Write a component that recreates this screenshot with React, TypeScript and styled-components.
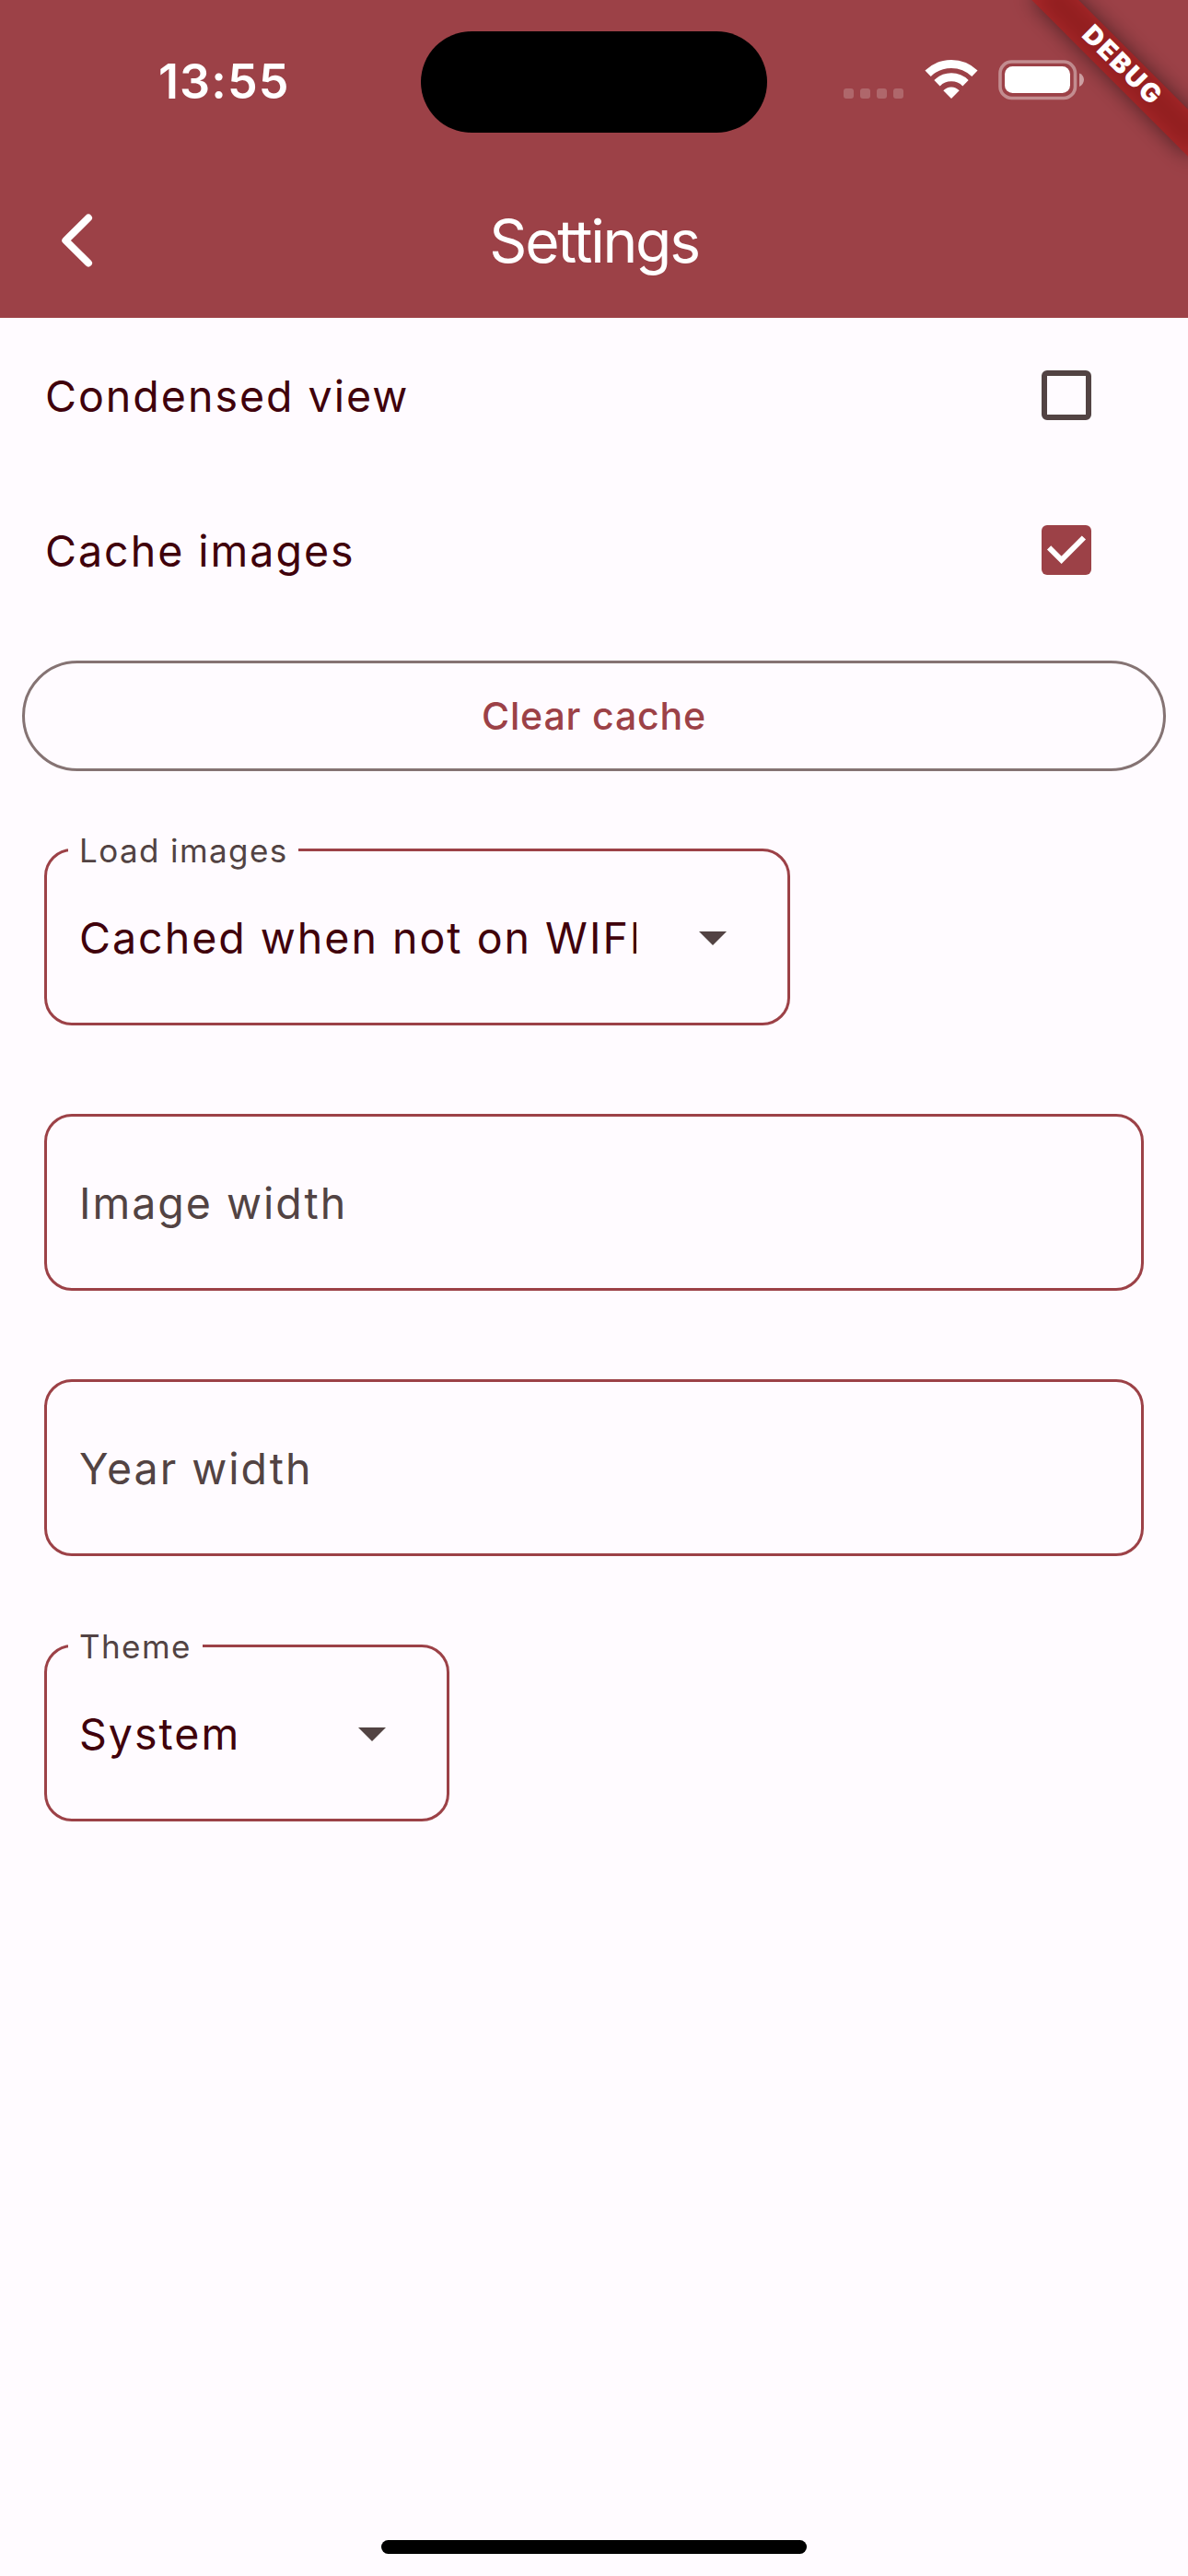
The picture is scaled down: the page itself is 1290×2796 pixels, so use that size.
import React from "react";
import styled, { createGlobalStyle } from "styled-components";

const color = {
  primary: "#9c4147",
  surface: "#fffbff",
  text: "#40000b",
  muted: "#524343",
  outline: "#857373",
};

const GlobalStyle = createGlobalStyle`
  *, *::before, *::after { box-sizing: border-box; }
  body { margin: 0; background: ${color.surface}; }
`;

const Screen = styled.div`
  width: 1290px;
  height: 2796px;
  position: relative;
  overflow: hidden;
  display: flex;
  flex-direction: column;
  background: ${color.surface};
  color: ${color.text};
  font-family: Inter, Roboto, "Liberation Sans", sans-serif;
  font-weight: 370;
  white-space: nowrap;
`;

const Header = styled.header`
  height: 345px;
  background: ${color.primary};
  color: #fff;
`;

const StatusBar = styled.div`
  height: 177px;
  display: grid;
  grid-template-columns: 457px 376px 1fr;
  align-items: start;
`;

const Clock = styled.div`
  padding: 58px 0 0 172px;
  font-size: 52px;
  line-height: 62px;
  font-weight: 600;
  letter-spacing: 1.1px;
`;

const Island = styled.div`
  height: 110px;
  margin-top: 34px;
  border-radius: 55px;
  background: #000;
`;

const StatusIcons = styled.div`
  display: flex;
  align-items: flex-end;
  padding: 64px 0 0 82.5px;
`;

const Signal = styled.div`
  display: flex;
  gap: 7px;
  margin: 0 22px 2px 0;
`;

const SignalDot = styled.span`
  width: 11px;
  height: 11px;
  border-radius: 3px;
  background: rgba(255, 255, 255, 0.2);
`;

const WifiIcon = styled.svg`
  width: 60px;
  height: 45px;
  display: block;
  margin-right: 21px;
`;

const BatteryIcon = styled.svg`
  width: 96px;
  height: 45px;
  display: block;
`;

const AppBar = styled.div`
  height: 168px;
  display: grid;
  grid-template-columns: 168px 1fr 168px;
  align-items: center;
`;

const BackButton = styled.button`
  width: 168px;
  height: 168px;
  padding: 0;
  border: 0;
  background: none;
  display: grid;
  place-items: center;
`;

const Title = styled.h1`
  margin: 0;
  padding-top: 2px;
  text-align: center;
  font-size: 64px;
  line-height: 80px;
  font-weight: 400;
  letter-spacing: -2.2px;
`;

const Content = styled.main`
  flex: 1;
  display: flex;
  flex-direction: column;
`;

const CheckRow = styled.label`
  height: 168px;
  padding: 0 105px 0 49px;
  display: flex;
  align-items: center;
  justify-content: space-between;
`;

const RowLabel = styled.span`
  font-size: 46.5px;
  line-height: 60px;
  padding-top: 2px;
  letter-spacing: 2px;
`;

const Box = styled.span<{ $checked?: boolean }>`
  width: 54px;
  height: 54px;
  border-radius: 6px;
  border: ${(p) => (p.$checked ? "0" : `6px solid ${color.muted}`)};
  background: ${(p) => (p.$checked ? color.primary : "transparent")};
`;

const ClearButton = styled.button`
  height: 120px;
  margin: 36px 24px 0;
  padding: 0;
  border: 3px solid ${color.outline};
  border-radius: 60px;
  background: none;
  color: ${color.primary};
  font: 500 41px/52px Inter, Roboto, "Liberation Sans", sans-serif;
  letter-spacing: 0.85px;
`;

const Fields = styled.div`
  display: flex;
  flex-direction: column;
  gap: 96px;
  margin: 84px 48px 0;
`;

const Field = styled.div<{ $width?: number }>`
  position: relative;
  width: ${(p) => (p.$width ? `${p.$width}px` : "100%")};
  height: 192px;
  padding: 1px 66px 0 35px;
  border: 3px solid ${color.primary};
  border-radius: 30px;
  display: flex;
  align-items: center;
  justify-content: space-between;
`;

const FloatingLabel = styled.span<{ $width: number }>`
  position: absolute;
  left: 23px;
  top: -23px;
  width: ${(p) => p.$width}px;
  padding-left: 12px;
  background: ${color.surface};
  color: ${color.muted};
  font-size: 35px;
  line-height: 44px;
  letter-spacing: 1.4px;
`;

const FieldText = styled.span<{ $muted?: boolean; $clip?: number }>`
  font-size: 46.5px;
  line-height: 60px;
  color: ${(p) => (p.$muted ? color.muted : color.text)};
  letter-spacing: 2px;
  width: ${(p) => (p.$clip ? `${p.$clip}px` : "auto")};
  overflow: hidden;
`;

const Caret = styled.span`
  margin-top: 2px;
  border: 15px solid transparent;
  border-top-color: ${color.muted};
  border-bottom: 0;
`;

const HomeIndicator = styled.div`
  width: 462px;
  height: 15px;
  margin: 0 auto 24px;
  border-radius: 8px;
  background: #000;
`;

const Banner = styled.div`
  position: absolute;
  top: 0;
  left: 1290px;
  width: 0;
  height: 0;
  transform: rotate(45deg);
`;

const BannerShadow = styled.div`
  position: absolute;
  left: -120px;
  top: 84px;
  width: 240px;
  height: 36px;
  background: rgba(0, 0, 0, 0.5);
  filter: blur(11.9px);
`;

const BannerStrip = styled.div`
  position: absolute;
  left: -120px;
  top: 84px;
  width: 240px;
  height: 36px;
  background: rgba(183, 28, 28, 0.63);
  color: #fff;
  text-align: center;
  font-size: 28.5px;
  line-height: 32px;
  font-weight: 900;
  letter-spacing: 2px;
`;

const Wifi = () => (
  <WifiIcon viewBox="0 0 60 45" fill="none" stroke="#fff">
    <path d="M4.6 15.7A36.5 36.5 0 0 1 55.4 15.7" strokeWidth="9" />
    <path d="M14.5 26.2A22 22 0 0 1 45.5 26.2" strokeWidth="9" />
    <path d="M30 43 21.3 34.2Q25 30.4 30 30.4T38.7 34.2Z" fill="#fff" stroke="none" />
  </WifiIcon>
);

const Battery = () => (
  <BatteryIcon viewBox="0 0 96 45">
    <rect x="2" y="3" width="81.5" height="39.5" rx="12.5" fill="none" stroke="#fff" strokeOpacity="0.4" strokeWidth="3.6" />
    <rect x="7" y="8" width="71" height="29" rx="8.5" fill="#fff" />
    <path d="M88 15.5C91 16.5 93 19.5 93 22.6S91 28.8 88 30Z" fill="#fff" fillOpacity="0.5" />
  </BatteryIcon>
);

const App = () => (
  <>
    <GlobalStyle />
    <Screen>
      <Header>
        <StatusBar>
          <Clock>13:55</Clock>
          <Island />
          <StatusIcons>
            <Signal>
              <SignalDot />
              <SignalDot />
              <SignalDot />
              <SignalDot />
            </Signal>
            <Wifi />
            <Battery />
          </StatusIcons>
        </StatusBar>
        <AppBar>
          <BackButton aria-label="Back">
            <svg width="168" height="168" viewBox="0 0 168 168" fill="none" stroke="#fff" strokeWidth="8" strokeLinecap="round" strokeLinejoin="round">
              <path d="M96 59.5 71.3 84 96 108.500" />
            </svg>
          </BackButton>
          <Title>Settings</Title>
        </AppBar>
      </Header>
      <Content>
        <CheckRow>
          <RowLabel>Condensed view</RowLabel>
          <Box />
        </CheckRow>
        <CheckRow>
          <RowLabel>Cache images</RowLabel>
          <Box $checked>
            <svg width="54" height="54" viewBox="0 0 54 54" fill="none" stroke="#fff" strokeWidth="6">
              <path d="M8.1 24.3 21.6 37.8 45.9 13.5" />
            </svg>
          </Box>
        </CheckRow>
        <ClearButton>Clear cache</ClearButton>
        <Fields>
          <Field $width={810}>
            <FloatingLabel $width={250}>Load images</FloatingLabel>
            <FieldText $clip={605}>Cached when not on WIFI</FieldText>
            <Caret />
          </Field>
          <Field>
            <FieldText $muted>Image width</FieldText>
          </Field>
          <Field>
            <FieldText $muted>Year width</FieldText>
          </Field>
          <Field $width={440}>
            <FloatingLabel $width={146}>Theme</FloatingLabel>
            <FieldText>System</FieldText>
            <Caret />
          </Field>
        </Fields>
      </Content>
      <HomeIndicator />
      <Banner>
        <BannerShadow />
        <BannerStrip>DEBUG</BannerStrip>
      </Banner>
    </Screen>
  </>
);

export default App;
